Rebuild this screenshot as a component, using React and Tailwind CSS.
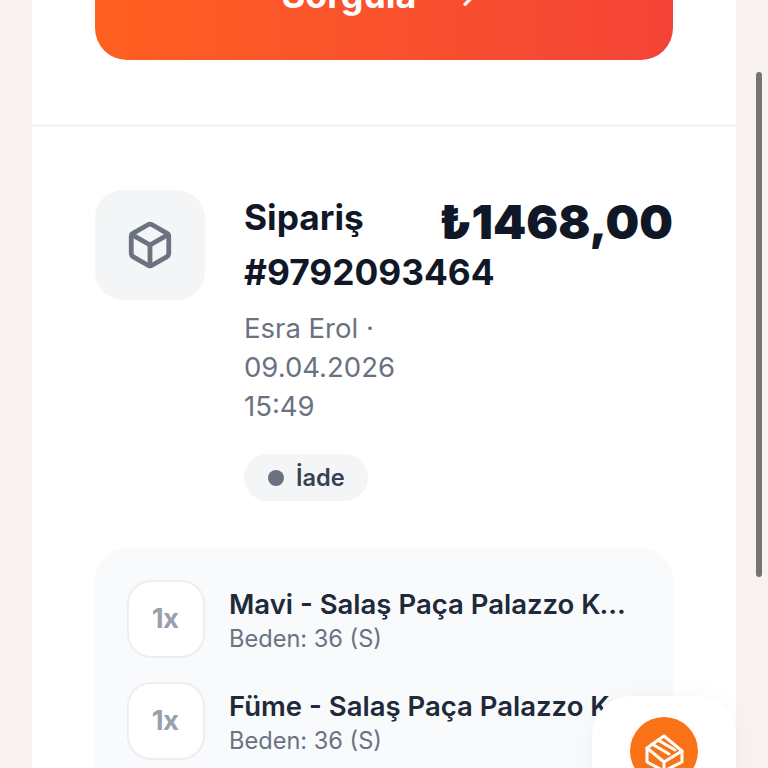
import { ArrowRight, Box } from "lucide-react";

function OrderItem({ name, size }) {
  return (
    <div className="flex items-center gap-6">
      <div className="flex h-[78px] w-[78px] shrink-0 items-center justify-center rounded-3xl border-2 border-gray-200/70 bg-white pr-0.5 text-[27.5px] font-bold tracking-tight text-gray-400">
        1x
      </div>
      <div className="min-w-0 flex-1">
        <p className="truncate pt-px text-[27.5px] leading-[39px] font-semibold text-gray-800">{name}</p>
        <p className="text-[23.6px] leading-[30px] text-gray-500">{size}</p>
      </div>
    </div>
  );
}

function StripedBox() {
  return (
    <svg width="40" height="40" viewBox="0 0 40 40" fill="none" stroke="currentColor" strokeWidth="3" strokeLinejoin="round" strokeLinecap="round">
      <path d="M20 5 38 20V31L20 40 3 31V17Z" />
      <path d="M3 17 20 31 38 20M20 31V40" />
      <path d="M8 13 25 23M14 9 31 19" />
    </svg>
  );
}

export default function App() {
  return (
    <div className="relative h-screen overflow-hidden bg-[#f8f3f1] font-['Inter',sans-serif]">
      <main className="mx-8 -mt-[60px] w-[704px] bg-white">
        <section className="border-b-[3px] border-[#f5f5f5] px-[63px] pb-[64px]">
          <button className="flex h-[120px] w-full items-center justify-center gap-[38px] rounded-b-[32px] bg-gradient-to-r from-[#ff5f1f] to-[#f44336] pb-2 text-[35.8px] font-bold text-white">
            Sorgula
            <ArrowRight size={32} strokeWidth={2.5} className="-translate-x-[5px] -translate-y-px" />
          </button>
        </section>

        <section className="px-[63px] pt-[63px]">
          <div className="flex items-start gap-[39px]">
            <div className="flex h-[110px] w-[110px] shrink-0 items-center justify-center rounded-[28px] bg-[#f4f5f7]">
              <Box size={50} strokeWidth={2.3} className="text-[#6b7280]" />
            </div>
            <div className="min-w-0 flex-1">
              <h2 className="text-[35.3px] leading-[55px] font-bold text-gray-900">Sipariş #9792093464</h2>
              <p className="mt-[9px] text-[27.5px] leading-[39px] text-gray-500">Esra Erol · 09.04.2026 15:49</p>
              <div className="mt-7 inline-flex h-[47px] items-center gap-3 rounded-full bg-[#f4f5f7] pr-[23px] pl-6 text-[23.6px] font-semibold text-gray-700">
                <span className="h-4 w-4 rounded-full bg-gray-500" />
                İade
              </div>
            </div>
            <p className="shrink-0 text-[47.4px] leading-[63px] font-black whitespace-nowrap text-gray-900">₺1468,00</p>
          </div>

          <div className="mt-[47px] flex flex-col gap-6 rounded-[32px] bg-[#f8fafc] p-8">
            <OrderItem name="Mavi - Salaş Paça Palazzo Kot Pantolon" size="Beden: 36 (S)" />
            <OrderItem name="Füme - Salaş Paça Palazzo Kot Pantolon" size="Beden: 36 (S)" />
            <OrderItem name="Mavi - Salaş Paça Palazzo Kot Pantolon" size="Beden: 38 (M)" />
          </div>
        </section>
      </main>

      <button className="absolute top-[696px] left-[592px] flex h-[144px] w-[144px] items-start justify-center rounded-t-[40px] bg-white pt-[21px] shadow-[0_0_24px_rgba(0,0,0,0.04)]">
        <span className="flex h-[68px] w-[68px] items-center justify-center rounded-full bg-[#f97316] text-white">
          <StripedBox />
        </span>
      </button>

      <div className="absolute top-[72px] left-[756px] h-[505px] w-[6px] rounded-full bg-[#787472]" />
    </div>
  );
}
